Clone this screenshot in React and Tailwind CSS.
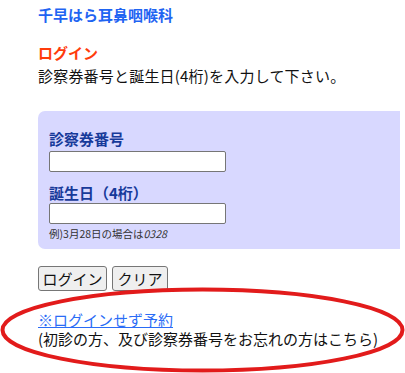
import { useState } from 'react';

export default function App() {
  const [cardNo, setCardNo] = useState('');
  const [birth, setBirth] = useState('');

  return (
    <div className="relative w-[405px] h-[373px] bg-white overflow-hidden font-['Noto_Sans_CJK_JP',sans-serif] text-[#111]">
      <div className="pl-[38px] pt-[6px]">
        {/* Header */}
        <h1 className="text-[15px] leading-[18px] font-bold text-[#1f64f2]">千早はら耳鼻咽喉科</h1>
        <h2 className="mt-[20px] text-[15px] leading-[18px] font-bold text-[#ff3c0c]">ログイン</h2>
        <p className="mt-[4px] text-[15px] leading-[20px] tracking-[0.2px]">診察券番号と誕生日(4桁)を入力して下さい。</p>

        {/* Form panel */}
        <div className="mt-[25px] mr-[5px] rounded-l-[7px] bg-[#d8d8ff] pl-[11px] pt-[19px] pb-[9px]">
          <label className="block text-[15px] leading-[18px] font-bold text-[#173a9a]">診察券番号</label>
          <input
            value={cardNo}
            onChange={(e) => setCardNo(e.target.value)}
            className="mt-[3px] block w-[177px] h-[21px] bg-white border border-[#767676] rounded-[2px] px-1 text-[13px] outline-none"
          />
          <label className="mt-[12px] block text-[15px] leading-[18px] font-bold text-[#173a9a]">誕生日（4桁）</label>
          <input
            value={birth}
            onChange={(e) => setBirth(e.target.value)}
            className="mt-[1px] block w-[177px] h-[21px] bg-white border border-[#767676] rounded-[2px] px-1 text-[13px] outline-none"
          />
          <p className="mt-[3px] text-[10.5px] leading-[13px] text-[#333]">
            例)3月28日の場合は<span className="italic">0328</span>
          </p>
        </div>

        {/* Buttons */}
        <div className="mt-[17px] flex gap-[5px]">
          <button className="w-[69px] h-[25px] bg-[#efefef] border border-[#767676] rounded-[3px] text-[15px] leading-none">ログイン</button>
          <button className="w-[56px] h-[25px] bg-[#efefef] border border-[#767676] rounded-[3px] text-[15px] leading-none">クリア</button>
        </div>

        {/* Link */}
        <a href="#" className="mt-[20px] block w-fit text-[15px] leading-[18px] text-[#2a6cf6] underline">※ログインせず予約</a>
        <p className="text-[15px] leading-[20px]">(初診の方、及び診察券番号をお忘れの方はこちら)</p>
      </div>

      {/* Red highlight ellipse */}
      <svg className="absolute left-0 top-0 pointer-events-none" width="405" height="373" viewBox="0 0 405 373">
        <ellipse cx="202.5" cy="330" rx="200" ry="40.5" fill="none" stroke="#e21b1b" strokeWidth="4" />
      </svg>
    </div>
  );
}
